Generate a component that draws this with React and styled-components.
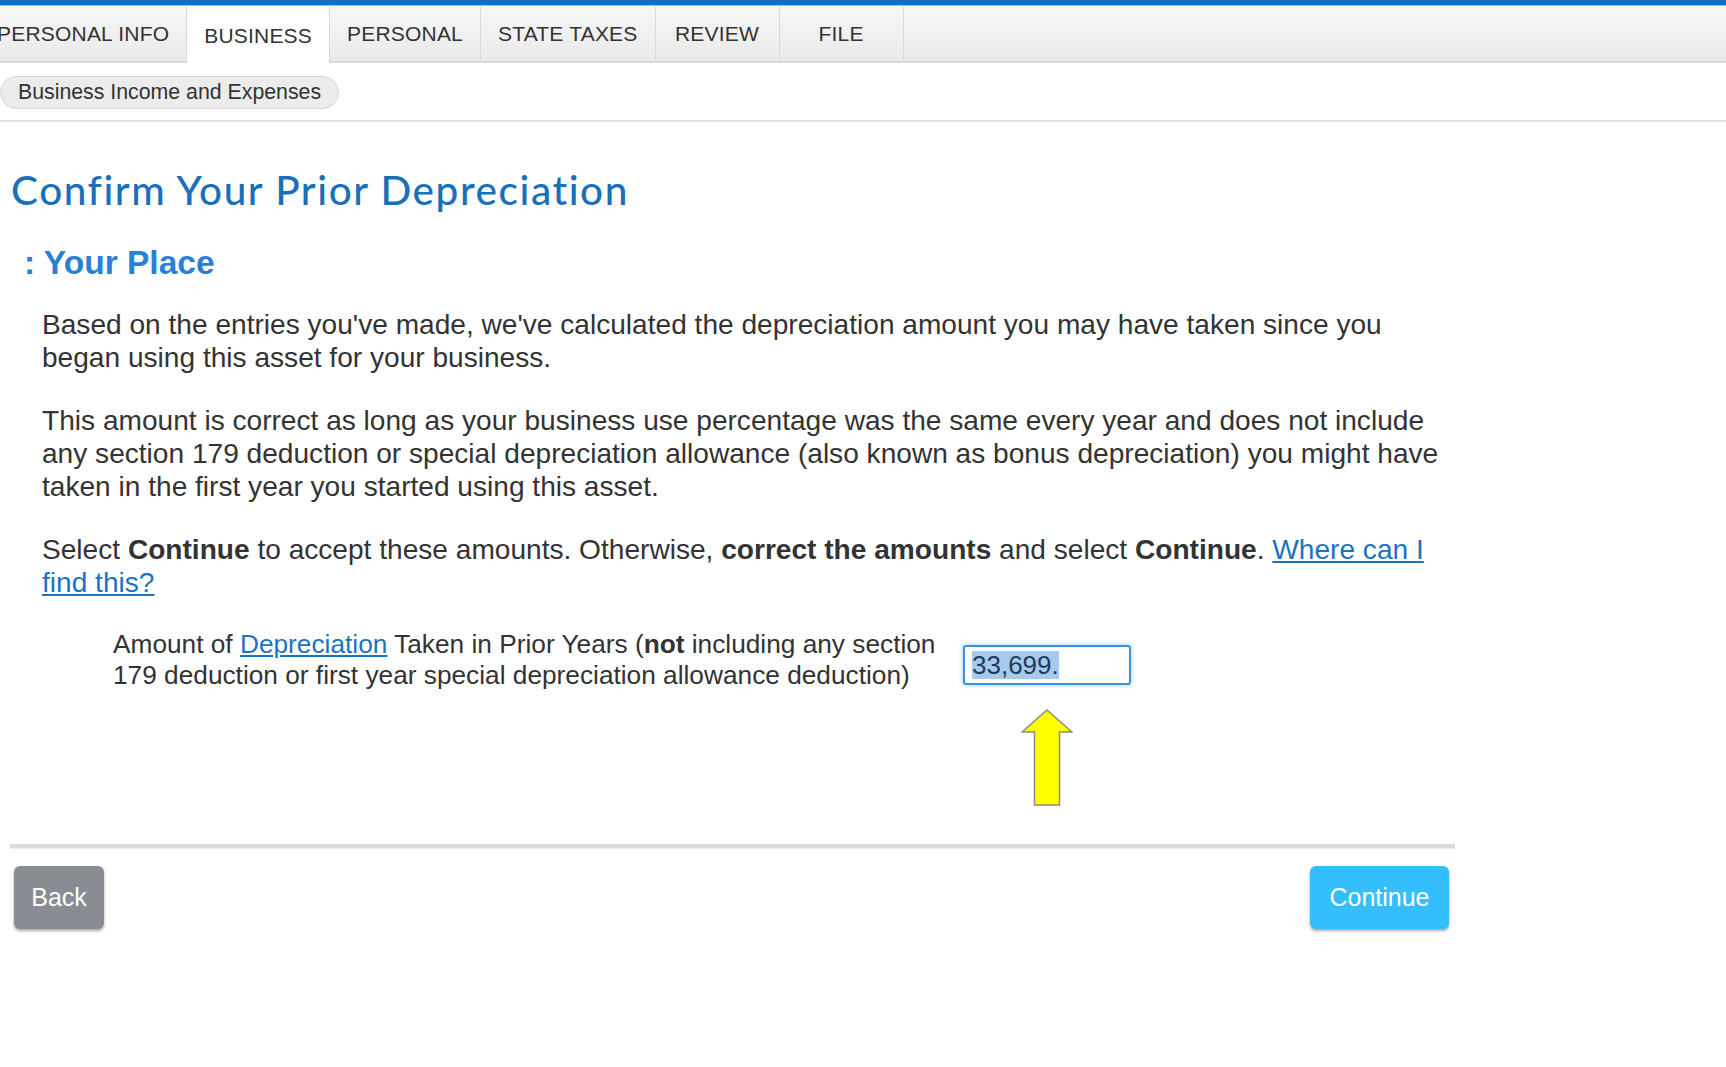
import React from "react";
import styled, { createGlobalStyle } from "styled-components";

const GlobalStyle = createGlobalStyle`
  html, body {
    margin: 0;
    padding: 0;
    background: #ffffff;
  }
  body {
    font-family: "Liberation Sans", Arial, sans-serif;
    color: #333333;
    overflow: hidden;
  }
`;

const Page = styled.div`
  width: 1726px;
  min-height: 1067px;
  background: #fff;
`;

const BrandStripe = styled.div`
  height: 5px;
  background: #0b70c2;
  border-bottom: 1px solid #8fcaf0;
`;

const TabBar = styled.nav`
  height: 57px;
  background: linear-gradient(#f6f7f7 0%, #efefef 60%, #e9e9e9 100%);
  border-bottom: 2px solid #dadada;
  box-sizing: border-box;
  overflow: visible;
`;

const TabList = styled.ul`
  display: flex;
  height: 100%;
  margin: 0 0 0 -20px;
  padding: 0;
  list-style: none;
`;

const Tab = styled.li`
  display: flex;
  align-items: center;
  justify-content: center;
  box-sizing: border-box;
  min-width: 124px;
  height: ${(p) => (p.$active ? "57px" : "55px")};
  padding: 0 17px;
  font-size: 21px;
  color: #333;
  text-transform: uppercase;
  letter-spacing: 0.2px;
  border-right: 1px solid #d8d8d8;
  background: ${(p) => (p.$active ? "#ffffff" : "transparent")};
  padding-top: ${(p) => (p.$active ? "2px" : "0")};
`;

const SubNav = styled.div`
  height: 59px;
  box-sizing: border-box;
  padding-top: 13px;
  border-bottom: 2px solid #e2e2e2;
`;

const Pill = styled.span`
  display: inline-flex;
  align-items: center;
  height: 33px;
  box-sizing: border-box;
  padding: 0 17px;
  font-size: 21.3px;
  color: #333;
  background: #ececec;
  border: 1px solid #d4d4d4;
  border-radius: 17px;
`;

const Main = styled.main`
  width: 1445px;
  margin-left: 10px;
`;

const Title = styled.h1`
  margin: 44px 0 0 1px;
  font-family: Lato, "Open Sans", sans-serif;
  font-weight: 500;
  font-size: 40.5px;
  letter-spacing: 1.55px;
  line-height: 47px;
  color: #1a6fb9;
`;

const SubTitle = styled.h2`
  margin: 31px 0 0 14px;
  font-size: 33.5px;
  line-height: 37px;
  font-weight: 700;
  color: #2a7fd6;
`;

const Body = styled.div`
  margin-top: 27px;
  padding-left: 32px;
`;

const Para = styled.p`
  margin: 0 0 30px;
  font-size: 28.1px;
  line-height: 33px;
  color: #333;
`;

const Link = styled.a`
  color: #1a73c2;
  text-decoration: underline;
  cursor: pointer;
`;

const FieldRow = styled.div`
  display: flex;
  align-items: flex-start;
  gap: 14px;
  padding-left: 103px;
`;

const FieldLabel = styled.label`
  width: 836px;
  font-size: 26.25px;
  line-height: 31px;
  color: #333;
`;

const FieldColumn = styled.div`
  display: flex;
  flex-direction: column;
  align-items: center;
  width: 168px;
  margin-top: 16px;
`;

const AmountBox = styled.div`
  width: 168px;
  height: 40px;
  box-sizing: border-box;
  border: 2px solid #3b94dc;
  border-radius: 3px;
  box-shadow: 0 0 5px rgba(70, 160, 230, 0.55);
  background: #fff;
  display: flex;
  align-items: center;
  padding-left: 7px;
  font-size: 26px;
  color: #1e3a5a;
`;

const Selected = styled.span`
  background: #a6caee;
  line-height: 28px;
`;

const Annotation = styled.svg`
  display: block;
  margin-top: 24px;
`;

const Divider = styled.hr`
  margin: 38px 0 0;
  height: 5px;
  border: none;
  background: #dbdbdb;
  border-bottom: 1px solid #ececec;
  box-sizing: border-box;
`;

const ButtonRow = styled.div`
  display: flex;
  justify-content: space-between;
  margin-top: 17px;
  padding: 0 6px 0 4px;
`;

const Button = styled.button`
  height: 63px;
  width: ${(p) => p.$width}px;
  border: none;
  border-radius: 6px;
  background: ${(p) => p.$bg};
  color: #fff;
  font-family: "Liberation Sans", Arial, sans-serif;
  font-size: 25px;
  box-shadow: 0 2px 3px rgba(0, 0, 0, 0.35);
  cursor: pointer;
  padding: 0;
`;

const tabs = ["Personal Info", "Business", "Personal", "State Taxes", "Review", "File"];

export default function App() {
  return (
    <Page>
      <GlobalStyle />
      <BrandStripe />
      <TabBar>
        <TabList>
          {tabs.map((t) => (
            <Tab key={t} $active={t === "Business"}>
              {t}
            </Tab>
          ))}
        </TabList>
      </TabBar>
      <SubNav>
        <Pill>Business Income and Expenses</Pill>
      </SubNav>
      <Main>
        <Title>Confirm Your Prior Depreciation</Title>
        <SubTitle>: Your Place</SubTitle>
        <Body>
          <Para>
            Based on the entries you've made, we've calculated the depreciation amount you may have
            taken since you began using this asset for your business.
          </Para>
          <Para>
            This amount is correct as long as your business use percentage was the same every year
            and does not include any section 179 deduction or special depreciation allowance (also
            known as bonus depreciation) you might have taken in the first year you started using
            this asset.
          </Para>
          <Para>
            Select <b>Continue</b> to accept these amounts. Otherwise, <b>correct the amounts</b>{" "}
            and select <b>Continue</b>. <Link>Where can I find this?</Link>
          </Para>
        </Body>
        <FieldRow>
          <FieldLabel>
            Amount of <Link>Depreciation</Link> Taken in Prior Years (<b>not</b> including any
            section 179 deduction or first year special depreciation allowance deduction)
          </FieldLabel>
          <FieldColumn>
            <AmountBox role="textbox">
              <Selected>33,699.</Selected>
            </AmountBox>
            <Annotation width="52" height="97" viewBox="0 0 52 97">
              <path
                d="M26 1 L51 23 L38.5 23 L38.5 96 L13.5 96 L13.5 23 L1 23 Z"
                fill="#ffff00"
                stroke="#8a8a7a"
                strokeWidth="1.5"
                strokeLinejoin="miter"
              />
            </Annotation>
          </FieldColumn>
        </FieldRow>
        <Divider />
        <ButtonRow>
          <Button $bg="#898c92" $width={90}>Back</Button>
          <Button $bg="#35befd" $width={139}>Continue</Button>
        </ButtonRow>
      </Main>
    </Page>
  );
}
